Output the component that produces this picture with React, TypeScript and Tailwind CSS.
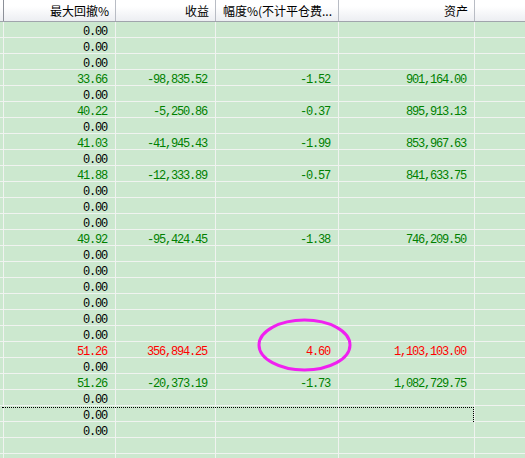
type Tone = 'zero' | 'green' | 'red'

type Row = {
  dd: string
  profit?: string
  pct?: string
  asset?: string
  tone: Tone
}

const rows: Row[] = [
  { dd: '0.00', tone: 'zero' },
  { dd: '0.00', tone: 'zero' },
  { dd: '0.00', tone: 'zero' },
  { dd: '33.66', profit: '-98,835.52', pct: '-1.52', asset: '901,164.00', tone: 'green' },
  { dd: '0.00', tone: 'zero' },
  { dd: '40.22', profit: '-5,250.86', pct: '-0.37', asset: '895,913.13', tone: 'green' },
  { dd: '0.00', tone: 'zero' },
  { dd: '41.03', profit: '-41,945.43', pct: '-1.99', asset: '853,967.63', tone: 'green' },
  { dd: '0.00', tone: 'zero' },
  { dd: '41.88', profit: '-12,333.89', pct: '-0.57', asset: '841,633.75', tone: 'green' },
  { dd: '0.00', tone: 'zero' },
  { dd: '0.00', tone: 'zero' },
  { dd: '0.00', tone: 'zero' },
  { dd: '49.92', profit: '-95,424.45', pct: '-1.38', asset: '746,209.50', tone: 'green' },
  { dd: '0.00', tone: 'zero' },
  { dd: '0.00', tone: 'zero' },
  { dd: '0.00', tone: 'zero' },
  { dd: '0.00', tone: 'zero' },
  { dd: '0.00', tone: 'zero' },
  { dd: '0.00', tone: 'zero' },
  { dd: '51.26', profit: '356,894.25', pct: '4.60', asset: '1,103,103.00', tone: 'red' },
  { dd: '0.00', tone: 'zero' },
  { dd: '51.26', profit: '-20,373.19', pct: '-1.73', asset: '1,082,729.75', tone: 'green' },
  { dd: '0.00', tone: 'zero' },
  { dd: '0.00', tone: 'zero' },
  { dd: '0.00', tone: 'zero' },
  { dd: '', tone: 'zero' },
  { dd: '', tone: 'zero' },
]

const toneClass: Record<Tone, string> = {
  zero: 'text-black',
  green: 'text-[#008000]',
  red: 'text-[#ff0000]',
}

const grid = 'grid grid-cols-[4px_112px_100px_123px_136px_1fr]'

const HeadCell = ({ children }: { children?: React.ReactNode }) => (
  <div className="overflow-hidden whitespace-nowrap border-r border-[#b8bcc4] pr-[6px] text-right leading-[21px]">
    {children}
  </div>
)

const Cell = ({ children, tone }: { children?: React.ReactNode; tone: Tone }) => (
  <div className={`h-[16px] border-r border-b border-[#f0f3f0] pr-[8px] pt-[3px] text-right leading-[14px] ${toneClass[tone]}`}>
    {children}
  </div>
)

export default function App() {
  return (
    <div className="relative h-[458px] w-[525px] overflow-hidden bg-[#cce8cf]">
      {/* column header */}
      <div
        className={`${grid} h-[22px] border-b border-[#a0a4ac] bg-linear-to-b from-white from-30% to-[#eceef2] text-[12px] text-black`}
        style={{ fontFamily: '"Noto Sans CJK SC", "Noto Sans", sans-serif' }}
      >
        <div className="border-r border-[#8c9098]" />
        <HeadCell>最大回撤%</HeadCell>
        <HeadCell>收益</HeadCell>
        <HeadCell>幅度%(不计平仓费...</HeadCell>
        <HeadCell>资产</HeadCell>
        <div />
      </div>

      {/* rows */}
      <div className="text-[12px] tracking-[-1.2px]" style={{ fontFamily: '"Liberation Mono", monospace' }}>
        {rows.map((r, i) => (
          <div key={i} className={`${grid} relative`}>
            <div className="h-[16px] border-r border-b border-[#f0f3f0]" />
            <Cell tone={r.tone}>{r.dd}</Cell>
            <Cell tone={r.tone}>{r.profit}</Cell>
            <Cell tone={r.tone}>{r.pct}</Cell>
            <Cell tone={r.tone}>{r.asset}</Cell>
            <div className="h-[16px] border-b border-[#f0f3f0]" />
            {i === 24 && (
              <div className="absolute left-[2px] top-[1px] h-[15px] w-[472px] border-t border-r border-dotted border-black" />
            )}
          </div>
        ))}
      </div>

      {/* annotation circle */}
      <svg className="absolute left-[256px] top-[317px]" width="97" height="56" viewBox="0 0 97 56">
        <ellipse cx="48.5" cy="28" rx="45.5" ry="25" fill="none" stroke="#f020f0" strokeWidth="3" />
      </svg>
    </div>
  )
}
